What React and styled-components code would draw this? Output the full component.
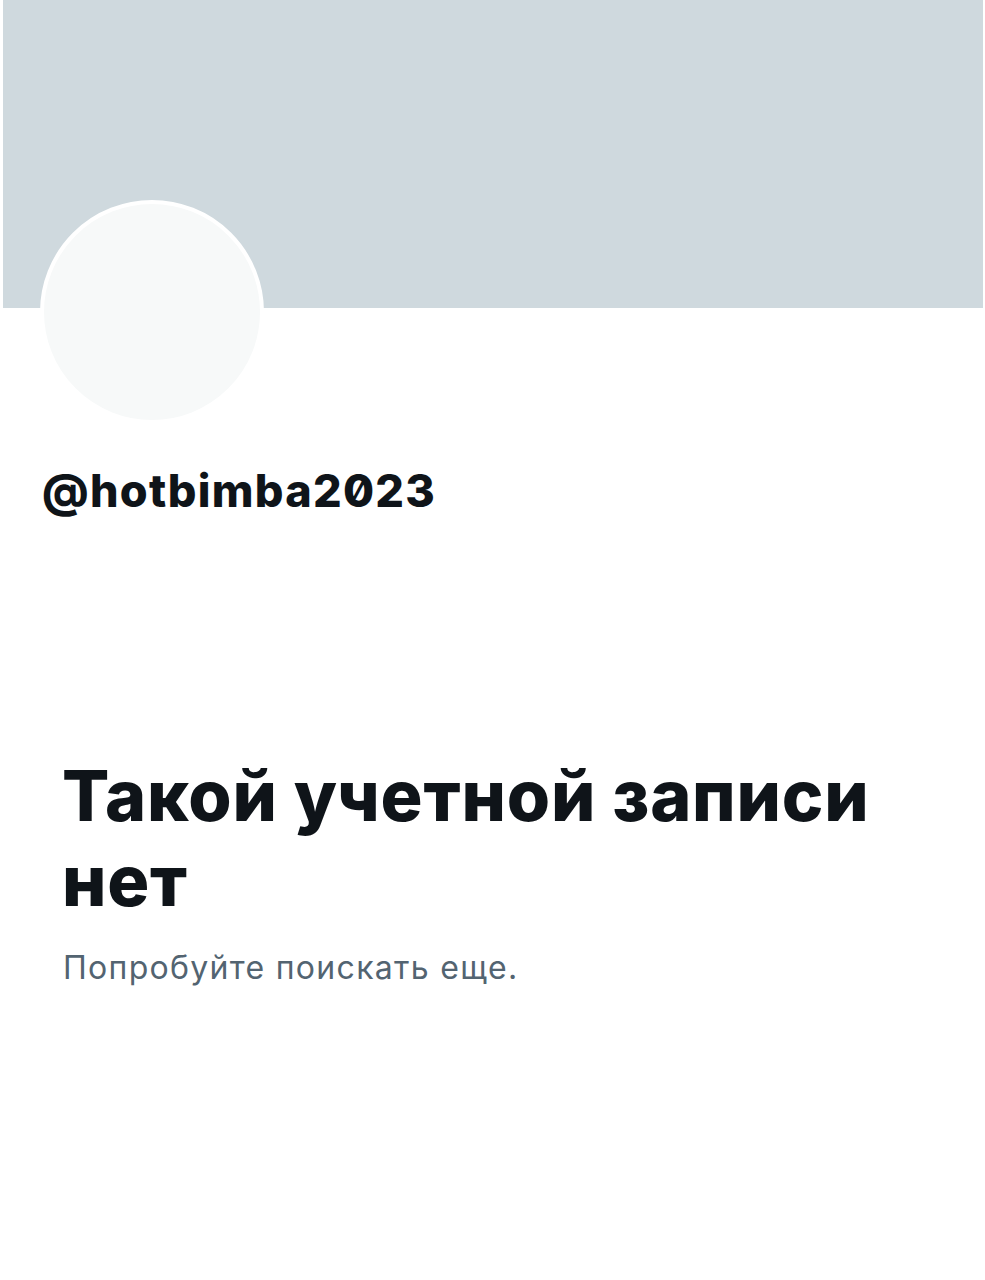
import React from "react";
import styled, { createGlobalStyle } from "styled-components";

const GlobalStyle = createGlobalStyle`
  html, body {
    margin: 0;
    padding: 0;
    background: #ffffff;
  }

  body {
    font-family: Inter, "Noto Sans", "Liberation Sans", sans-serif;
    color: #0f1419;
  }
`;

const StyledProfilePage = styled.div`
  width: 985px;
  min-height: 1280px;
  background: #ffffff;
  padding: 0 2px 0 3px;
  box-sizing: border-box;
`;

const StyledBanner = styled.div`
  height: 308px;
  background-color: #cfd9de;
`;

const StyledAvatar = styled.div`
  width: 216px;
  height: 216px;
  margin: -108px 0 0 37px;
  border: 4px solid #ffffff;
  border-radius: 50%;
  background-color: #f7f9f9;
  position: relative;
`;

const StyledHandle = styled.h2`
  margin: 40px 0 0 39px;
  font-size: 45px;
  font-weight: 800;
  line-height: 54px;
  letter-spacing: 1.3px;
  font-feature-settings: "zero" 1;
`;

const StyledEmptyState = styled.section`
  margin: 235px 0 0 59px;
  max-width: 860px;

  .title {
    margin: 0;
    font-size: 70px;
    font-weight: 800;
    line-height: 85px;
    letter-spacing: 0.8px;
  }

  .text {
    margin: 24px 0 0 1px;
    font-size: 32px;
    line-height: 41px;
    letter-spacing: 1.3px;
    color: #536471;
  }
`;

const App = () => {
  return (
    <>
      <GlobalStyle />
      <StyledProfilePage>
        <StyledBanner />
        <StyledAvatar />
        <StyledHandle>@hotbimba2023</StyledHandle>
        <StyledEmptyState>
          <h1 className="title">Такой учетной записи нет</h1>
          <p className="text">Попробуйте поискать еще.</p>
        </StyledEmptyState>
      </StyledProfilePage>
    </>
  );
};

export default App;
